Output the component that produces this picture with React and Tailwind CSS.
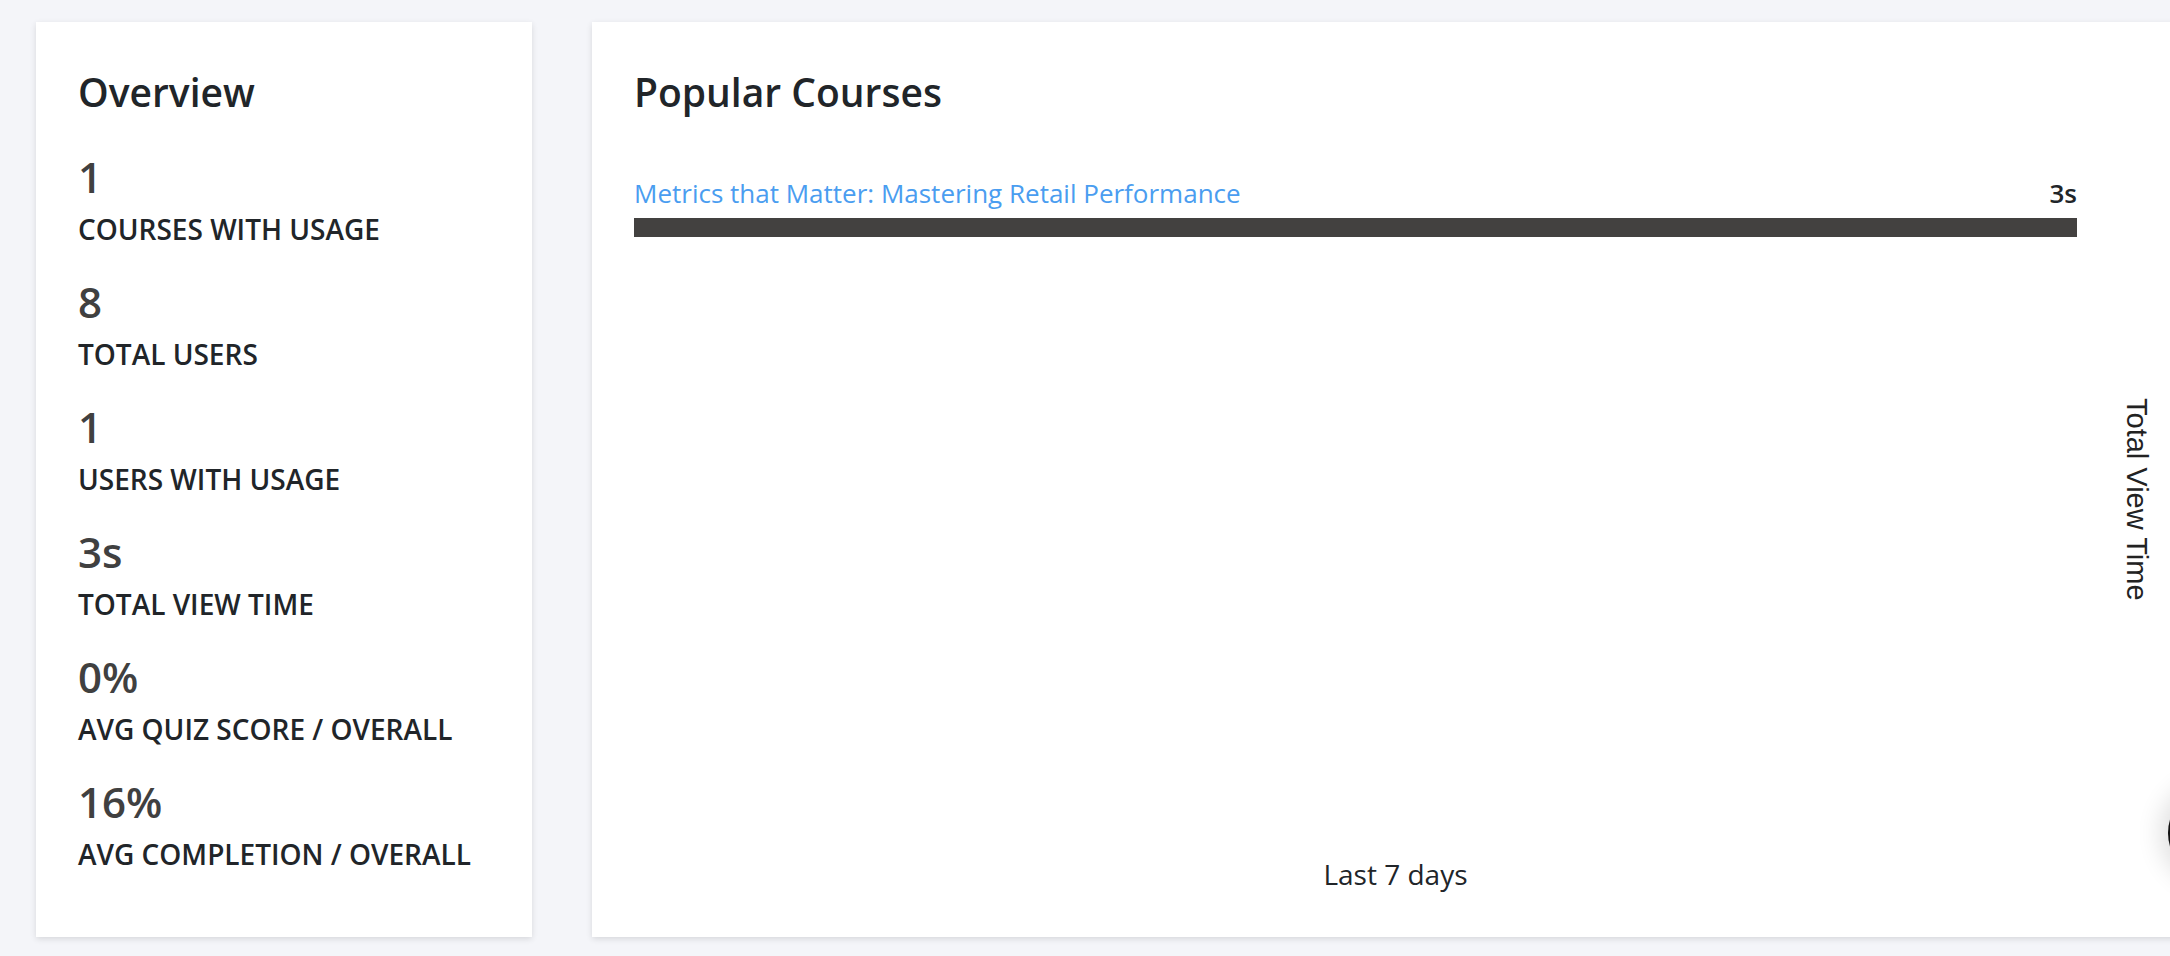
const stats = [
  { value: "1", label: "COURSES WITH USAGE" },
  { value: "8", label: "TOTAL USERS" },
  { value: "1", label: "USERS WITH USAGE" },
  { value: "3s", label: "TOTAL VIEW TIME" },
  { value: "0%", label: "AVG QUIZ SCORE / OVERALL" },
  { value: "16%", label: "AVG COMPLETION / OVERALL" },
];

const courses = [
  { name: "Metrics that Matter: Mastering Retail Performance", time: "3s", pct: 100 },
];

function Overview() {
  return (
    <div className="w-[496px] shrink-0 bg-white pl-[42px] pr-[44px] pt-[44px] pb-[65px] shadow-[0_2px_6px_rgba(0,0,0,0.12)]">
      <h2 className="text-[39px] leading-[52px] font-semibold text-[#212529]">Overview</h2>
      <div className="mt-[34px] flex flex-col gap-[30px]">
        {stats.map((s, i) => (
          <div key={i} className="flex flex-col gap-[9px]">
            <div className="text-[42px] leading-[50px] font-semibold text-[#404040]">{s.value}</div>
            <div className="text-[28px] leading-[36px] font-semibold text-[#212529] whitespace-nowrap">
              {s.label}
            </div>
          </div>
        ))}
      </div>
    </div>
  );
}

function PopularCourses() {
  return (
    <div className="w-[1608px] shrink-0 bg-white pl-[42px] pr-[43px] pt-[44px] pb-[45px] shadow-[0_2px_6px_rgba(0,0,0,0.12)]">
      <h2 className="text-[39px] leading-[52px] font-semibold text-[#212529]">Popular Courses</h2>
      <div className="mt-[58px] flex h-[646px]">
        <div className="flex-1 flex flex-col">
          {courses.map((c, i) => (
            <div key={i} className="flex flex-col gap-[8px]">
              <div className="flex justify-between items-baseline">
                <a href="#" className="text-[26px] leading-[34px] text-[#4a9df0]">
                  {c.name}
                </a>
                <span className="text-[26px] leading-[34px] font-semibold text-[#212529]">{c.time}</span>
              </div>
              <div className="h-[19px] bg-[#eeeeee]">
                <div className="h-full bg-[#434140]" style={{ width: `${c.pct}%` }} />
              </div>
            </div>
          ))}
        </div>
        <div className="w-[80px] flex items-center justify-end">
          <span
            className="mr-[4px] text-[29px] leading-[33px] text-[#222222] whitespace-nowrap [writing-mode:vertical-rl]"
            style={{ fontFamily: '"Liberation Sans", Arial, sans-serif' }}
          >
            Total View Time
          </span>
        </div>
      </div>
      <div className="mt-[34px] text-center text-[28px] leading-[36px] text-[#212529]">Last 7 days</div>
    </div>
  );
}

export default function App() {
  return (
    <div
      className="relative w-[2170px] h-[956px] overflow-hidden bg-[#f4f5f9]"
      style={{ fontFamily: '"Open Sans", "Noto Sans", sans-serif' }}
    >
      <div className="flex items-start gap-[60px] pl-[36px] pt-[22px]">
        <Overview />
        <PopularCourses />
      </div>
      <div className="absolute left-[2168px] top-[787px] w-[92px] h-[92px] rounded-full bg-[#111111] shadow-[0_0_24px_8px_rgba(0,0,0,0.12)]" />
    </div>
  );
}
